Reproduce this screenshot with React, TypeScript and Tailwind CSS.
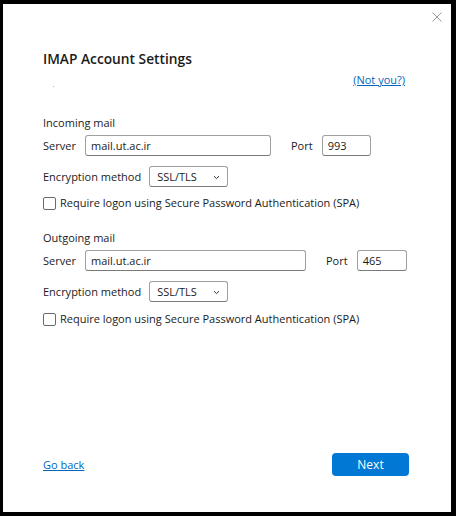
import React from 'react';

const font = { fontFamily: '"Open Sans", "Noto Sans", Arial, sans-serif' };

function ServerRow({ server, port, inputWidth, portWidth }: { server: string; port: string; inputWidth: string; portWidth: string }) {
  return (
    <div className="mt-[4px] flex h-[21px] items-center">
      <span className="w-[42px] shrink-0">Server</span>
      <div className={`${inputWidth} flex h-[21px] items-center rounded-[3px] border border-[#a0a0a0] border-b-[#7a7a7a] px-[5px]`}>
        {server}
      </div>
      <span className="ml-[20px]">Port</span>
      <div className={`${portWidth} ml-[9px] flex h-[21px] items-center rounded-[3px] border border-[#a0a0a0] border-b-[#7a7a7a] px-[5px]`}>
        {port}
      </div>
    </div>
  );
}

function EncryptionRow() {
  return (
    <div className="mt-[10px] flex h-[21px] items-center">
      <span>Encryption method</span>
      <div className="ml-[8px] flex h-[21px] w-[79px] items-center justify-between rounded-[3px] border border-[#a0a0a0] border-b-[#7a7a7a] pl-[7px] pr-[7px]">
        <span>SSL/TLS</span>
        <svg width="7" height="5" viewBox="0 0 7 5" className="mt-[1px]">
          <path d="M1 1.2 L3.5 3.6 L6 1.2" fill="none" stroke="#333" strokeWidth="1" />
        </svg>
      </div>
    </div>
  );
}

function SpaCheckbox({ top }: { top: string }) {
  return (
    <div className={`${top} flex h-[16px] items-center`}>
      <span className="h-[13px] w-[13px] shrink-0 rounded-[2px] border border-[#6b6b6b] bg-white" />
      <span className="ml-[4px]">Require logon using Secure Password Authentication (SPA)</span>
    </div>
  );
}

export default function App() {
  return (
    <div className="h-[516px] w-[456px] bg-black pb-[4px] pl-[3px] pr-[5px] pt-[4px]" style={font}>
      <div className="flex h-full flex-col bg-white text-[11px] leading-[16px] text-[#1b1b1b]">
        <div className="flex justify-end pr-[9px] pt-[8px]">
          <svg width="10" height="10" viewBox="0 0 10 10">
            <path d="M0.5 0.5 L9.5 9.5 M9.5 0.5 L0.5 9.5" stroke="#9a9a9a" strokeWidth="1" />
          </svg>
        </div>

        <div className="flex flex-1 flex-col pl-[40px] pr-[42px]">
          <h1 className="mt-[27px] text-[13.75px] font-semibold leading-[20px] text-[#1a1a1a]">IMAP Account Settings</h1>

          <div className="mt-[3px] flex items-start justify-between pr-[4px]">
            <span className="ml-[10px] mt-[14px] h-[1px] w-[1px] bg-[#b5b5b5]" />
            <a href="#" className="text-[#0067c0] underline">(Not you?)</a>
          </div>

          <div className="mt-[27px]">Incoming mail</div>
          <ServerRow server="mail.ut.ac.ir" port="993" inputWidth="w-[186px]" portWidth="w-[49px]" />
          <EncryptionRow />
          <SpaCheckbox top="mt-[8px]" />

          <div className="mt-[19px]">Outgoing mail</div>
          <ServerRow server="mail.ut.ac.ir" port="465" inputWidth="w-[221px]" portWidth="w-[50px]" />
          <EncryptionRow />
          <SpaCheckbox top="mt-[9px]" />

          <div className="mb-[36px] mt-auto flex items-center justify-between">
            <a href="#" className="text-[#0067c0] underline">Go back</a>
            <button className="h-[23px] w-[77px] rounded-[4px] bg-[#0078d4] text-[12px] text-white">Next</button>
          </div>
        </div>
      </div>
    </div>
  );
}
